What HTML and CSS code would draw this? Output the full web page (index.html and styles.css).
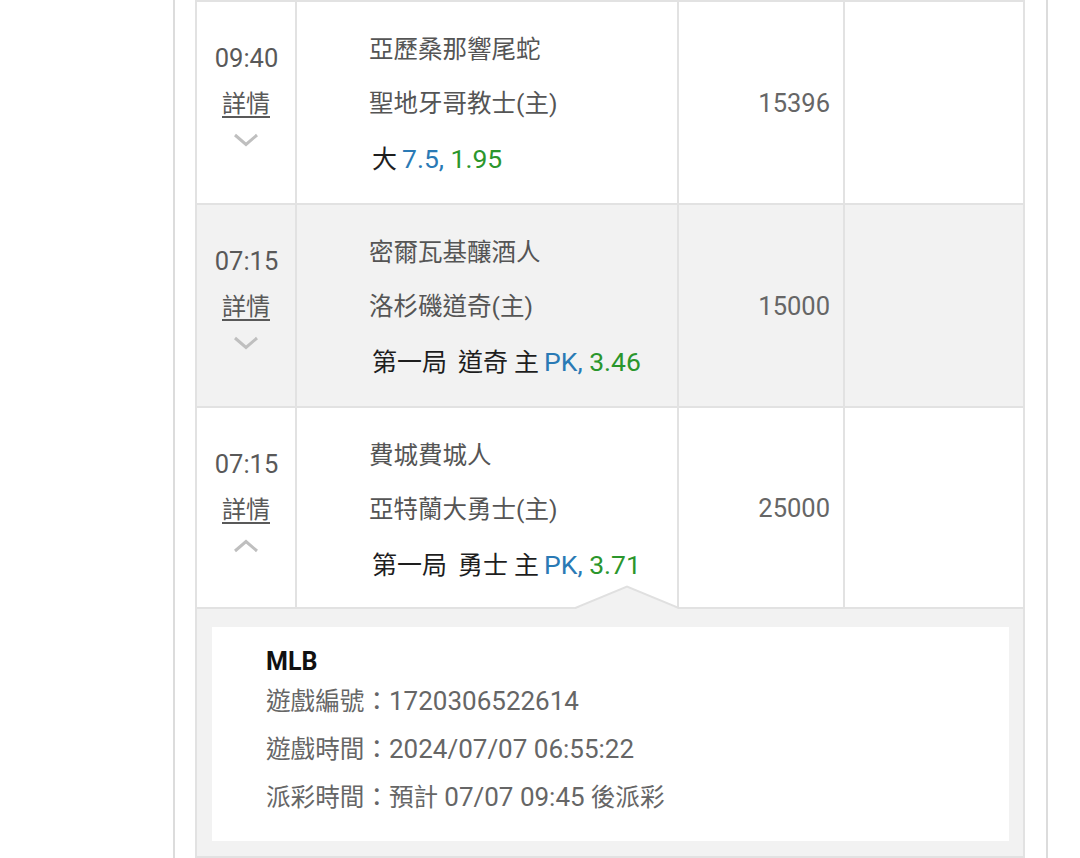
FILE: index.html
```html
<!DOCTYPE html>
<html lang="zh-Hant">
<head>
<meta charset="utf-8">
<title>注單</title>
<link rel="stylesheet" href="styles.css">
</head>
<body>
<div class="panel">
  <div class="table">
    <div class="row row-1">
      <div class="cell c-time">
        <div class="time">09:40</div>
        <div class="detail-link">詳情</div>
        <div class="chev"><svg width="26" height="14" viewBox="0 0 26 14"><polyline points="2,2 13,11.5 24,2" fill="none" stroke="#bfbfbf" stroke-width="3"/></svg></div>
      </div>
      <div class="cell c-team">
        <div class="t-line">亞歷桑那響尾蛇</div>
        <div class="t-line">聖地牙哥教士(主)</div>
        <div class="t-bet">大<span class="blue">7.5, </span><span class="green">1.95</span></div>
      </div>
      <div class="cell c-amt">15396</div>
      <div class="cell c-last"></div>
    </div>
    <div class="row row-2 alt">
      <div class="cell c-time">
        <div class="time">07:15</div>
        <div class="detail-link">詳情</div>
        <div class="chev"><svg width="26" height="14" viewBox="0 0 26 14"><polyline points="2,2 13,11.5 24,2" fill="none" stroke="#bfbfbf" stroke-width="3"/></svg></div>
      </div>
      <div class="cell c-team">
        <div class="t-line">密爾瓦基釀酒人</div>
        <div class="t-line">洛杉磯道奇(主)</div>
        <div class="t-bet">第一局<span class="gap"> </span>道奇<span class="gap gap-s"> </span>主<span class="blue">PK, </span><span class="green">3.46</span></div>
      </div>
      <div class="cell c-amt">15000</div>
      <div class="cell c-last"></div>
    </div>
    <div class="row row-3">
      <div class="cell c-time">
        <div class="time">07:15</div>
        <div class="detail-link">詳情</div>
        <div class="chev"><svg width="26" height="14" viewBox="0 0 26 14"><polyline points="2,12 13,2.5 24,12" fill="none" stroke="#bfbfbf" stroke-width="3"/></svg></div>
      </div>
      <div class="cell c-team">
        <div class="t-line">費城費城人</div>
        <div class="t-line">亞特蘭大勇士(主)</div>
        <div class="t-bet">第一局<span class="gap"> </span>勇士<span class="gap gap-s"> </span>主<span class="blue">PK, </span><span class="green">3.71</span></div>
      </div>
      <div class="cell c-amt">25000</div>
      <div class="cell c-last"></div>
    </div>
    <div class="details">
      <svg class="arrow" width="104" height="24" viewBox="0 0 104 24">
        <polygon points="0,24 52,1 104,24" fill="#f2f2f2"/>
        <polyline points="0,23 52,1.5 104,23" fill="none" stroke="#e0e0e0" stroke-width="2"/>
      </svg>
      <div class="info">
        <div class="league">MLB</div>
        <div class="info-line">遊戲編號：<span class="num">1720306522614</span></div>
        <div class="info-line">遊戲時間：<span class="num">2024/07/07 06:55:22</span></div>
        <div class="info-line">派彩時間：預計 <span class="num">07/07 09:45</span> 後派彩</div>
      </div>
    </div>
  </div>
</div>
</body>
</html>
```

FILE: styles.css
```css
* { box-sizing: border-box; }

html, body {
  margin: 0;
  padding: 0;
  background: #ffffff;
}

body {
  font-family: Roboto, "Noto Sans CJK TC", "Noto Sans", sans-serif;
  color: #555555;
  width: 1080px;
  height: 858px;
  overflow: hidden;
}

.panel {
  margin-left: 173px;
  width: 875px;
  height: 858px;
  border-left: 2px solid #dcdcdc;
  border-right: 2px solid #dcdcdc;
  padding-left: 20px;
  padding-right: 21px;
}

.table {
  width: 830px;
}

.row {
  display: flex;
  height: 203px;
  border-top: 2px solid #e2e2e2;
  border-left: 2px solid #e2e2e2;
  border-right: 2px solid #e2e2e2;
  background: #ffffff;
}

.row-3 {
  height: 201px;
}

.row.alt {
  background: #f2f2f2;
}

.cell {
  border-right: 2px solid #e2e2e2;
}

.cell.c-last {
  border-right: none;
  flex: 1;
}

.c-time {
  width: 100px;
  padding-top: 34px;
  display: flex;
  flex-direction: column;
  align-items: center;
  font-size: 25.5px;
  color: #595959;
}

.time {
  line-height: 44px;
  height: 45px;
  padding-left: 1px;
}

.detail-link {
  line-height: 46px;
  height: 46px;
  font-size: 24px;
  text-decoration: underline;
  text-underline-offset: 4px;
  text-decoration-thickness: 1.5px;
}

.chev {
  height: 26px;
  display: flex;
  align-items: center;
  justify-content: center;
}

.chev svg {
  display: block;
}

.c-team {
  width: 382px;
  padding-top: 21px;
  padding-left: 72px;
}

.t-line {
  font-size: 24.5px;
  line-height: 54px;
  height: 54px;
  color: #555555;
}

.t-bet {
  font-size: 25px;
  line-height: 56px;
  height: 56px;
  color: #1e1e1e;
  padding-left: 3px;
  white-space: nowrap;
}

.gap {
  display: inline-block;
  width: 11px;
}

.gap.gap-s {
  width: 6px;
}

.blue {
  color: #2a7ab5;
  margin-left: 5px;
  font-size: 26.5px;
}

.green {
  color: #2b962c;
  font-size: 26.5px;
}

.c-amt {
  width: 166px;
  display: flex;
  align-items: center;
  justify-content: flex-end;
  padding-right: 13px;
  font-size: 25.5px;
  color: #666666;
}

.details {
  position: relative;
  height: 251px;
  background: #f2f2f2;
  border: 2px solid #e2e2e2;
  padding: 18px 14px 15px 15px;
}

.arrow {
  position: absolute;
  left: 378px;
  top: -24px;
  display: block;
}

.info {
  background: #ffffff;
  height: 214px;
  padding: 20px 0 20px 54px;
}

.league {
  font-weight: 700;
  font-size: 25px;
  line-height: 30px;
  height: 30px;
  color: #111111;
}

.info-line {
  font-size: 24.6px;
  line-height: 48px;
  height: 48px;
  color: #666666;
  white-space: nowrap;
}

.num {
  font-size: 26px;
}
```
